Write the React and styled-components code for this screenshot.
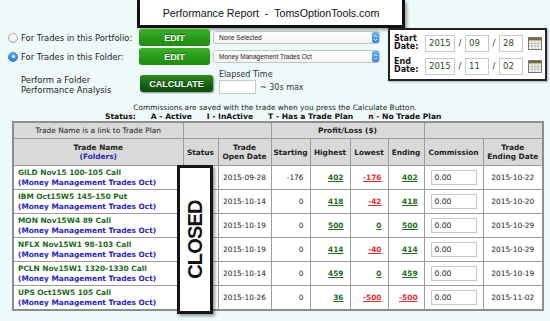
import React from 'react';
import styled, { createGlobalStyle, css } from 'styled-components';

const GlobalStyle = createGlobalStyle`
  html, body {
    margin: 0;
    padding: 0;
    background: #eefafa;
  }
  body {
    font-family: "DejaVu Sans", Verdana, sans-serif;
    color: #222;
  }
`;

const Page = styled.div`
  width: 550px;
  height: 321px;
  overflow: hidden;
`;

const TitleBox = styled.div`
  width: 262px;
  height: 25px;
  margin-left: 137px;
  background: #fff;
  border: 3px solid #111;
  border-top: 0;
  box-shadow: 2px 2px 3px rgba(0, 0, 0, 0.35);
  display: flex;
  align-items: center;
  justify-content: center;
  font-family: "Liberation Sans", Arial, sans-serif;
  font-size: 10.7px;
  color: #111;
  white-space: pre;
`;

const Controls = styled.div`
  display: flex;
  align-items: flex-start;
  margin-top: 1px;
`;

const LeftCol = styled.div`
  width: 382px;
  display: flex;
  flex-direction: column;
  gap: 2px;
`;

const Row = styled.div`
  display: flex;
  align-items: center;
  height: 17px;
`;

const Radio = styled.span`
  width: 10px;
  height: 10px;
  margin-left: 8px;
  border-radius: 50%;
  box-sizing: border-box;
  border: 1px solid #a8a8a8;
  background: linear-gradient(#fff, #e6e6e6);
  display: flex;
  align-items: center;
  justify-content: center;
  ${({ checked }) =>
    checked &&
    css`
      border-color: #2f7fd8;
      background: linear-gradient(#5aa8f5, #2d7fe0);
      &::after {
        content: '';
        width: 3px;
        height: 3px;
        border-radius: 50%;
        background: #fff;
      }
    `}
`;

const Label = styled.span`
  width: 118px;
  margin-left: 3px;
  font-size: 8.4px;
  color: #222;
  white-space: nowrap;
`;

const GreenButton = styled.div`
  width: ${({ w }) => w}px;
  height: 17px;
  border-radius: 3px;
  background: ${({ dark }) =>
    dark ? 'linear-gradient(#2f8a26, #155f0f 60%, #0e4a0a)' : 'linear-gradient(#3fae2c, #279a1a 55%, #1f8a14)'};
  box-shadow: ${({ dark }) => (dark ? '1px 1px 2px rgba(0,0,0,0.45)' : 'none')};
  color: #fff;
  font-family: "Liberation Sans", Arial, sans-serif;
  font-weight: bold;
  font-size: 9px;
  display: flex;
  align-items: center;
  justify-content: center;
  text-shadow: 0 -1px 0 rgba(0, 0, 0, 0.35);
`;

const Select = styled.div`
  width: 167px;
  height: 13px;
  margin-left: 3px;
  box-sizing: border-box;
  border: 1px solid #c4c4c4;
  border-radius: 3px;
  background: linear-gradient(#fff, #f2f2f2);
  display: flex;
  align-items: center;
  justify-content: space-between;
  padding-left: 5px;
  font-family: "Liberation Sans", Arial, sans-serif;
  font-size: 6.5px;
  color: #222;
`;

const Stepper = styled.span`
  width: 7px;
  height: 11px;
  border-radius: 2px;
  background: linear-gradient(#6ab2fb, #2f86ea);
  display: flex;
  align-items: center;
  justify-content: center;
`;

const CalcRow = styled.div`
  display: flex;
  align-items: flex-start;
  margin-top: 2px;
`;

const CalcLabel = styled.div`
  width: 119px;
  padding-left: 21px;
  padding-top: 6px;
  font-size: 8.4px;
  line-height: 10px;
  color: #222;
`;

const CalcButton = styled(GreenButton)`
  margin-top: 6px;
`;

const Elapsed = styled.div`
  margin-left: 6px;
  font-size: 8px;
  color: #333;
  line-height: 9px;
  padding-top: 1px;
`;

const ElapsedLine = styled.div`
  display: flex;
  align-items: center;
  gap: 4px;
  margin-top: 1px;
`;

const SmallInput = styled.div`
  width: ${({ w }) => w}px;
  height: ${({ h }) => h || 14}px;
  box-sizing: border-box;
  border: 1px solid #c8c8c8;
  background: #fff;
  display: flex;
  align-items: center;
  padding-left: 3px;
  font-size: ${({ fs }) => fs || 7.6}px;
  color: ${({ color }) => color || '#222'};
`;

const DateBox = styled.div`
  margin-left: 6px;
  margin-top: -1px;
  width: 159px;
  height: 53px;
  box-sizing: border-box;
  border: 2px solid #222;
  background: #fff;
  box-shadow: 1px 1px 2px rgba(0, 0, 0, 0.3);
  display: flex;
  flex-direction: column;
  justify-content: center;
  gap: 6px;
  padding-left: 4px;
`;

const DateRow = styled.div`
  display: flex;
  align-items: center;
`;

const DateLabel = styled.div`
  width: 31px;
  font-size: 8px;
  font-weight: bold;
  line-height: 8.5px;
  color: #111;
`;

const Slash = styled.span`
  width: 10px;
  text-align: center;
  font-size: 8.5px;
  color: #333;
`;

const Notes = styled.div`
  margin-top: 8px;
  text-align: center;
  font-size: 7.4px;
  line-height: 10px;
  color: #222;
`;

const StatusLine = styled.div`
  display: flex;
  padding-left: 105px;
  font-size: 7.6px;
  font-weight: bold;
  line-height: 8px;
  color: #111;
  span {
    margin-right: ${({ gap }) => gap}px;
  }
`;

const TableWrap = styled.div`
  position: relative;
  margin-left: 12px;
  width: 530px;
`;

const Table = styled.table`
  width: 530px;
  border-collapse: collapse;
  border: 2px solid #8e8e8e;
  table-layout: fixed;
  font-size: 7.4px;
`;

const Th = styled.th`
  background: #d9d9d9;
  border: 1px solid #9c9c9c;
  font-weight: ${({ light }) => (light ? 'normal' : 'bold')};
  color: #222;
  line-height: 9px;
  padding: 0;
  white-space: nowrap;
  height: ${({ h }) => h}px;
`;

const Td = styled.td`
  background: #fff;
  border: 1px solid #9c9c9c;
  height: 23px;
  padding: 0 ${({ pad }) => (pad === undefined ? 6 : pad)}px;
  text-align: ${({ align }) => align || 'center'};
  color: #222;
  line-height: 9.5px;
  white-space: nowrap;
`;

const NameCell = styled(Td)`
  padding-left: 4px;
  font-weight: bold;
`;

const TradeName = styled.div`
  color: #1d6b1d;
`;

const Folder = styled.div`
  color: #2626b8;
`;

const Money = styled.span`
  font-weight: bold;
  text-decoration: underline;
  color: ${({ neg }) => (neg ? '#e03030' : '#1d6e1d')};
`;

const Closed = styled.div`
  position: absolute;
  left: 165px;
  top: 44px;
  width: 36px;
  height: 149px;
  box-sizing: border-box;
  border: 3px solid #151515;
  background: #fff;
  box-shadow: 2px 2px 3px rgba(0, 0, 0, 0.4);
  display: flex;
  align-items: center;
  justify-content: center;
`;

const ClosedText = styled.span`
  transform: rotate(-90deg);
  font-family: "Liberation Sans", Arial, sans-serif;
  font-weight: bold;
  font-size: 20px;
  color: #111;
  letter-spacing: -0.8px;
`;

const StepperIcon = () => (
  <svg width="5" height="8" viewBox="0 0 5 8">
    <path d="M1 3 L2.5 1.5 L4 3 M1 5 L2.5 6.5 L4 5" stroke="#fff" strokeWidth="0.9" fill="none" />
  </svg>
);

const CalendarIcon = () => (
  <svg width="14" height="13" viewBox="0 0 14 13" style={{ marginLeft: 5 }}>
    <rect x="0.5" y="0.5" width="13" height="12" fill="#f4f4f4" stroke="#777" />
    <rect x="1" y="1" width="12" height="2.5" fill="#6a6a55" />
    <rect x="1" y="3.5" width="12" height="0.8" fill="#e8c84a" />
    {[4, 7, 10].map((x) => (
      <line key={x} x1={x} y1="4.3" x2={x} y2="12" stroke="#aaa" strokeWidth="0.6" />
    ))}
    {[6.5, 9].map((y) => (
      <line key={y} x1="1" y1={y} x2="13" y2={y} stroke="#aaa" strokeWidth="0.6" />
    ))}
  </svg>
);

const trades = [
  { name: 'GILD Nov15 100-105 Call', open: '2015-09-28', start: -176, high: 402, low: -176, end: 402, close: '2015-10-22' },
  { name: 'IBM Oct15W5 145-150 Put', open: '2015-10-14', start: 0, high: 418, low: -42, end: 418, close: '2015-10-20' },
  { name: 'MON Nov15W4 89 Call', open: '2015-10-19', start: 0, high: 500, low: 0, end: 500, close: '2015-10-29' },
  { name: 'NFLX Nov15W1 98-103 Call', open: '2015-10-19', start: 0, high: 414, low: -40, end: 414, close: '2015-10-29' },
  { name: 'PCLN Nov15W1 1320-1330 Call', open: '2015-10-14', start: 0, high: 459, low: 0, end: 459, close: '2015-10-19' },
  { name: 'UPS Oct15W5 105 Call', open: '2015-10-26', start: 0, high: 36, low: -500, end: -500, close: '2015-11-02' },
];

const DateFields = ({ label, y, m, d }) => (
  <DateRow>
    <DateLabel>
      {label}
      <br />
      Date:
    </DateLabel>
    <SmallInput w={30} h={17} fs={8.5} color="#2d4d2d">{y}</SmallInput>
    <Slash>/</Slash>
    <SmallInput w={24} h={17} fs={8.5} color="#2d4d2d">{m}</SmallInput>
    <Slash>/</Slash>
    <SmallInput w={24} h={17} fs={8.5} color="#2d4d2d">{d}</SmallInput>
    <CalendarIcon />
  </DateRow>
);

const App = () => (
  <Page>
    <GlobalStyle />
    <TitleBox>Performance Report  -  TomsOptionTools.com</TitleBox>
    <Controls>
      <LeftCol>
        <Row>
          <Radio />
          <Label>For Trades in this Portfolio:</Label>
          <GreenButton w={71}>EDIT</GreenButton>
          <Select>
            None Selected
            <Stepper>
              <StepperIcon />
            </Stepper>
          </Select>
        </Row>
        <Row>
          <Radio checked />
          <Label>For Trades in this Folder:</Label>
          <GreenButton w={71}>EDIT</GreenButton>
          <Select>
            Money Management Trades Oct
            <Stepper>
              <StepperIcon />
            </Stepper>
          </Select>
        </Row>
        <CalcRow>
          <CalcLabel>
            Perform a Folder
            <br />
            Performance Analysis
          </CalcLabel>
          <CalcButton w={73} dark>
            CALCULATE
          </CalcButton>
          <Elapsed>
            Elapsed Time
            <ElapsedLine>
              <SmallInput w={37} />
              ~ 30s max
            </ElapsedLine>
          </Elapsed>
        </CalcRow>
      </LeftCol>
      <DateBox>
        <DateFields label="Start" y="2015" m="09" d="28" />
        <DateFields label="End" y="2015" m="11" d="02" />
      </DateBox>
    </Controls>
    <Notes>Commissions are saved with the trade when you press the Calculate Button.</Notes>
    <StatusLine gap={15}>
      <span>Status:</span>
      <span>A - Active</span>
      <span>I - InActive</span>
      <span>T - Has a Trade Plan</span>
      <span>n - No Trade Plan</span>
    </StatusLine>
    <TableWrap>
      <Table>
        <colgroup>
          <col style={{ width: 170 }} />
          <col style={{ width: 35 }} />
          <col style={{ width: 53 }} />
          <col style={{ width: 39 }} />
          <col style={{ width: 40 }} />
          <col style={{ width: 38 }} />
          <col style={{ width: 36 }} />
          <col style={{ width: 59 }} />
          <col style={{ width: 60 }} />
        </colgroup>
        <thead>
          <tr>
            <Th h={15} light>Trade Name is a link to Trade Plan</Th>
            <Th h={15} colSpan={2} />
            <Th h={15} colSpan={4}>Profit/Loss ($)</Th>
            <Th h={15} colSpan={2} />
          </tr>
          <tr>
            <Th h={26}>
              Trade Name
              <Folder>(Folders)</Folder>
            </Th>
            <Th h={26}>Status</Th>
            <Th h={26}>
              Trade
              <br />
              Open Date
            </Th>
            <Th h={26}>Starting</Th>
            <Th h={26}>Highest</Th>
            <Th h={26}>Lowest</Th>
            <Th h={26}>Ending</Th>
            <Th h={26}>Commission</Th>
            <Th h={26}>
              Trade
              <br />
              Ending Date
            </Th>
          </tr>
        </thead>
        <tbody>
          {trades.map((t) => (
            <tr key={t.name}>
              <NameCell align="left">
                <TradeName>{t.name}</TradeName>
                <Folder>(Money Management Trades Oct)</Folder>
              </NameCell>
              <Td />
              <Td pad={0}>{t.open}</Td>
              <Td align="right">{t.start}</Td>
              <Td align="right">
                <Money neg={t.high < 0}>{t.high}</Money>
              </Td>
              <Td align="right">
                <Money neg={t.low < 0}>{t.low}</Money>
              </Td>
              <Td align="right">
                <Money neg={t.end < 0}>{t.end}</Money>
              </Td>
              <Td align="left">
                <SmallInput w={46} h={15}>0.00</SmallInput>
              </Td>
              <Td pad={0}>{t.close}</Td>
            </tr>
          ))}
        </tbody>
      </Table>
      <Closed>
        <ClosedText>CLOSED</ClosedText>
      </Closed>
    </TableWrap>
  </Page>
);

export default App;
